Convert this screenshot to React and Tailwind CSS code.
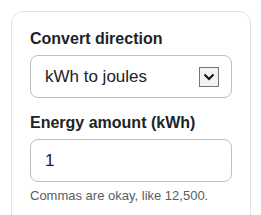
import React from "react";

export default function App() {
  return (
    <div className="w-[261px] h-[215px] overflow-hidden bg-white pl-[11px] pr-[10px] pt-[11px]" style={{ fontFamily: '"Liberation Sans", Arial, sans-serif' }}>
      <div className="h-[240px] rounded-[12px] border border-[#dde3e3] px-[18px] pt-[17px]">
        <div className="text-[16px] font-bold leading-[20px] text-[#1c2426]">Convert direction</div>
        <div className="mt-[6px] flex h-[43px] items-center justify-between rounded-[8px] border border-[#b9c1c1] pl-[14px] pr-[12px]">
          <span className="text-[17px] text-[#222]">kWh to joules</span>
          <div className="flex h-[20px] w-[20px] items-center justify-center border border-[#767676] bg-[#f3f3f3]">
            <svg width="12" height="8" viewBox="0 0 12 8">
              <path d="M1.5 1.5 L6 6 L10.5 1.5" fill="none" stroke="#111" strokeWidth="2" />
            </svg>
          </div>
        </div>
        <div className="mt-[15px] text-[16px] font-bold leading-[20px] text-[#1c2426]">Energy amount (kWh)</div>
        <div className="mt-[6px] flex h-[43px] items-center rounded-[8px] border border-[#b9c1c1] pl-[14px]">
          <span className="text-[17px] text-[#222]">1</span>
        </div>
        <div className="mt-[6px] text-[13px] leading-[15px] text-[#555d5f]">Commas are okay, like 12,500.</div>
      </div>
    </div>
  );
}
